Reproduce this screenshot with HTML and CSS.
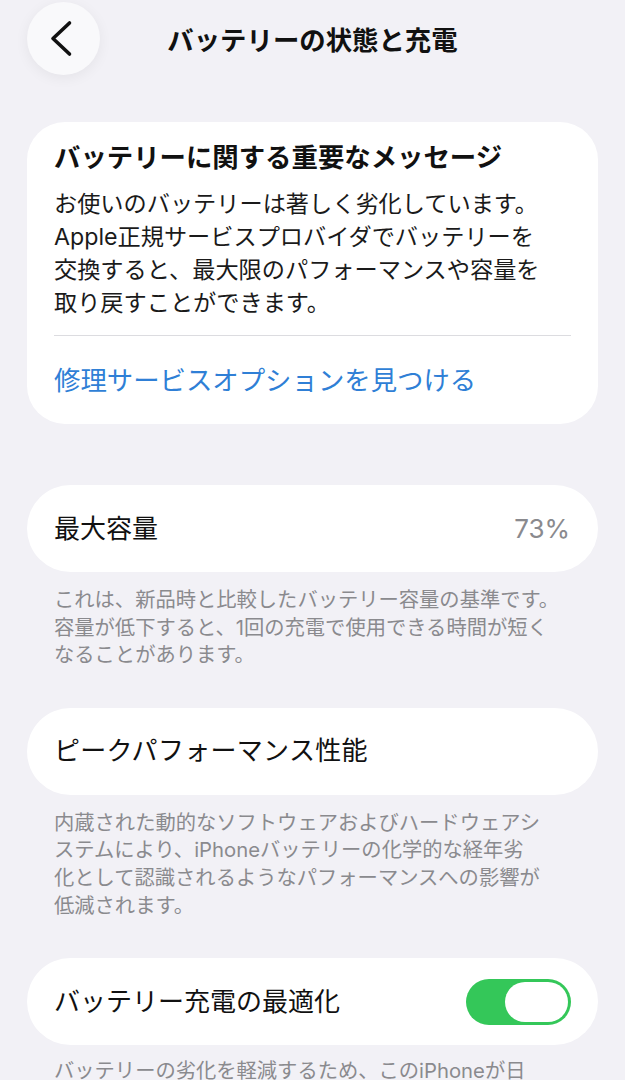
FILE: index.html
```html
<!DOCTYPE html>
<html lang="ja">
<head>
<meta charset="utf-8">
<title>バッテリーの状態と充電</title>
<link rel="stylesheet" href="styles.css">
</head>
<body>
<div class="screen">
  <header class="nav">
    <div class="nav-left">
      <button class="back" aria-label="戻る">
        <svg width="73" height="73" viewBox="0 0 73 73"><path d="M42.5 21 L26 36.5 L42.5 52" fill="none" stroke="#111" stroke-width="3.6" stroke-linecap="round" stroke-linejoin="round"/></svg>
      </button>
    </div>
    <h1 class="nav-title">バッテリーの状態と充電</h1>
    <div class="nav-right"></div>
  </header>

  <section class="card message">
    <h2 class="message-title">バッテリーに関する重要なメッセージ</h2>
    <p class="message-body">お使いのバッテリーは著しく劣化しています。<br>Apple正規サービスプロバイダでバッテリーを<br>交換すると、最大限のパフォーマンスや容量を<br>取り戻すことができます。</p>
    <div class="divider"></div>
    <a class="link" href="#">修理サービスオプションを見つける</a>
  </section>

  <section class="card row first-row">
    <span class="label">最大容量</span>
    <span class="value">73%</span>
  </section>
  <p class="footnote">これは、新品時と比較したバッテリー容量の基準です。<br>容量が低下すると、1回の充電で使用できる時間が短く<br>なることがあります。</p>

  <section class="card row">
    <span class="label wide">ピークパフォーマンス性能</span>
  </section>
  <p class="footnote">内蔵された動的なソフトウェアおよびハードウェアシ<br>ステムにより、iPhoneバッテリーの化学的な経年劣<br>化として認識されるようなパフォーマンスへの影響が<br>低減されます。</p>

  <section class="card row">
    <span class="label">バッテリー充電の最適化</span>
    <span class="toggle on"><span class="knob"></span></span>
  </section>
  <p class="footnote last">バッテリーの劣化を軽減するため、このiPhoneが日</p>
</div>
</body>
</html>
```

FILE: styles.css
```css
* { box-sizing: border-box; }
html, body { margin: 0; padding: 0; }
body {
  background: #f2f1f6;
  font-family: "Inter", "Noto Sans CJK JP", sans-serif;
  color: #151515;
  overflow: hidden;
}
.screen {
  width: 625px;
  height: 1080px;
  overflow: hidden;
  padding: 2px 27px 0 27px;
}
.nav {
  display: grid;
  grid-template-columns: 1fr auto 1fr;
  align-items: center;
  height: 73px;
}
.back {
  width: 73px;
  height: 73px;
  border-radius: 50%;
  border: none;
  padding: 0;
  margin: 0;
  background: #f9f9fb;
  box-shadow: 0 3px 14px rgba(0, 0, 0, 0.06);
  display: flex;
  align-items: center;
  justify-content: center;
}
.back svg { display: block; }
.nav-title {
  margin: 0;
  font-size: 26.4px;
  font-weight: 700;
  line-height: 34px;
  color: #111;
  transform: translateY(1px);
}
.card {
  background: #fff;
  border-radius: 38px;
}
.message {
  margin-top: 47px;
  padding: 18px 27px 27px 27px;
}
.message-title {
  margin: 0;
  font-size: 26.4px;
  font-weight: 700;
  line-height: 34px;
  color: #111;
}
.message-body {
  margin: 14px 0 0 0;
  font-size: 23.2px;
  line-height: 33px;
  color: #1a1a1a;
}
.divider {
  height: 1px;
  background: #dcdce0;
  margin-top: 15px;
}
.link {
  display: block;
  margin-top: 27px;
  font-size: 26.4px;
  line-height: 34px;
  color: #2f7fd6;
  text-decoration: none;
}
.row {
  display: flex;
  align-items: center;
  justify-content: space-between;
  height: 87px;
  border-radius: 44px;
  padding: 0 28px 0 27px;
  margin-top: 39px;
}
.first-row { margin-top: 61px; }
.label {
  font-size: 26px;
  line-height: 34px;
  color: #111;
}
.label.wide { letter-spacing: 0.3px; }
.value {
  font-size: 26px;
  line-height: 34px;
  color: #8a8a8e;
}
.footnote {
  margin: 14px 0 0 0;
  padding: 0 27px;
  font-size: 20.3px;
  line-height: 27.6px;
  color: #8a8a8e;
  white-space: nowrap;
}
.footnote.last { margin-top: 12px; }
.toggle {
  width: 105px;
  height: 46px;
  border-radius: 23px;
  background: #34c759;
  padding: 3px;
  display: flex;
  justify-content: flex-end;
  margin-right: -1px;
}
.knob {
  width: 63px;
  height: 40px;
  border-radius: 20px;
  background: #fff;
}
```
